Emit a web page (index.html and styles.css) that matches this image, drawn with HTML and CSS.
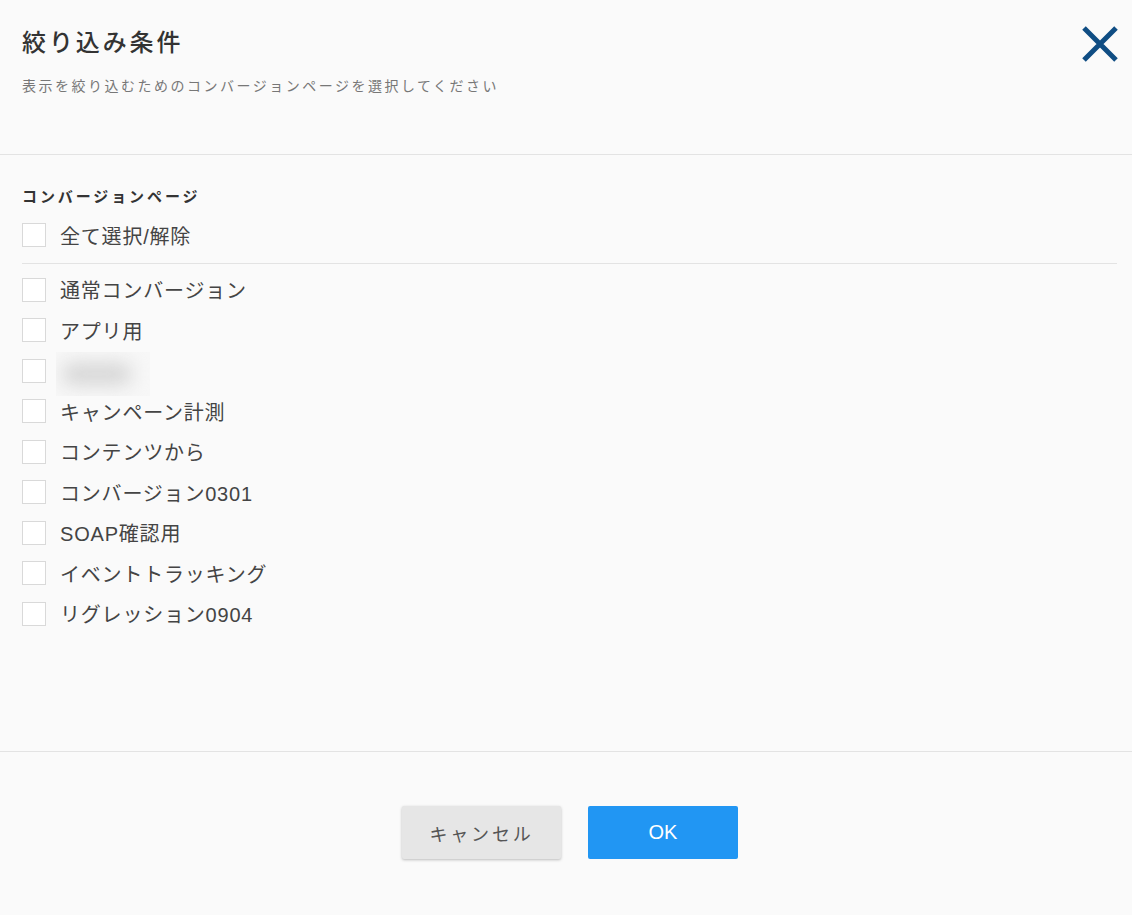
FILE: index.html
```html
<!DOCTYPE html>
<html lang="ja">
<head>
    <meta charset="UTF-8">
    <title>絞り込み条件</title>
    <link rel="stylesheet" href="styles.css">
</head>
<body>
    <div id="dialog">
        <div class="dialog-header">
            <h1 class="dialog-title">絞り込み条件</h1>
            <p class="dialog-note">表示を絞り込むためのコンバージョンページを選択してください</p>
            <button class="close-button" aria-label="閉じる">
                <svg width="38" height="38" viewBox="0 0 38 38">
                    <path d="M3 3 L35 35 M35 3 L3 35" stroke="#0f4d83" stroke-width="5" fill="none"/>
                </svg>
            </button>
        </div>
        <div class="dialog-body">
            <div class="section-label">コンバージョンページ</div>
            <label class="check-row select-all"><span class="box"></span>全て選択/解除</label>
            <div class="check-list">
                <label class="check-row"><span class="box"></span>通常コンバージョン</label>
                <label class="check-row"><span class="box"></span>アプリ用</label>
                <label class="check-row"><span class="box"></span><span class="masked"><span class="masked-blob"></span></span></label>
                <label class="check-row"><span class="box"></span>キャンペーン計測</label>
                <label class="check-row"><span class="box"></span>コンテンツから</label>
                <label class="check-row"><span class="box"></span>コンバージョン0301</label>
                <label class="check-row"><span class="box"></span>SOAP確認用</label>
                <label class="check-row"><span class="box"></span>イベントトラッキング</label>
                <label class="check-row"><span class="box"></span>リグレッション0904</label>
            </div>
        </div>
        <div class="dialog-footer">
            <button class="btn btn-cancel">キャンセル</button>
            <button class="btn btn-ok">OK</button>
        </div>
    </div>
</body>
</html>
```

FILE: styles.css
```css
body {
    margin: 0;
    background-color: #fafafa;
    font-family: "Liberation Sans", "Noto Sans CJK JP", sans-serif;
    color: #444444;
}

#dialog {
    width: 1132px;
    height: 915px;
}

.dialog-header {
    position: relative;
    height: 155px;
    box-sizing: border-box;
    padding: 25px 22px 0;
    border-bottom: 1px solid #e3e3e3;
}

.dialog-title {
    margin: 0;
    font-size: 24px;
    line-height: 36px;
    font-weight: 500;
    letter-spacing: 2.9px;
    color: #333333;
}

.dialog-note {
    margin: 15px 0 0;
    font-size: 14px;
    line-height: 20px;
    letter-spacing: 2.5px;
    color: #777777;
}

.close-button {
    position: absolute;
    top: 25px;
    right: 13px;
    padding: 0;
    border: none;
    background: none;
    cursor: pointer;
}

.dialog-body {
    height: 597px;
    box-sizing: border-box;
    padding: 31px 15px 0 22px;
    border-bottom: 1px solid #e3e3e3;
}

.section-label {
    font-size: 15px;
    line-height: 22px;
    font-weight: bold;
    letter-spacing: 2.9px;
    color: #333333;
}

.check-row {
    display: flex;
    align-items: center;
    gap: 14px;
    height: 40.5px;
    font-size: 20px;
    letter-spacing: 0.8px;
    color: #444444;
    cursor: pointer;
}

.select-all {
    margin-top: 7px;
    padding-bottom: 7px;
    border-bottom: 1px solid #e3e3e3;
}

.check-list {
    padding-top: 6px;
}

.box {
    width: 22px;
    height: 22px;
    border: 1px solid #d9d9d9;
    background-color: #ffffff;
    flex-shrink: 0;
}

.masked {
    display: flex;
    align-items: center;
    width: 94px;
    height: 44px;
    margin-left: -4px;
    margin-top: 6px;
    overflow: hidden;
    background-color: #f7f7f7;
}

.masked-blob {
    width: 70px;
    height: 22px;
    margin-left: 6px;
    background-color: #d6d6d6;
    border-radius: 11px;
    filter: blur(9px);
}

.dialog-footer {
    display: flex;
    justify-content: center;
    gap: 27px;
    padding: 54px 0 0 8px;
}

.btn {
    height: 53px;
    border: none;
    border-radius: 2px;
    font-family: "Liberation Sans", "Noto Sans CJK JP", sans-serif;
    cursor: pointer;
}

.btn-cancel {
    width: 159px;
    background-color: #e6e6e6;
    color: #555555;
    font-size: 18px;
    letter-spacing: 2.8px;
    box-shadow: 0 1px 3px rgba(0, 0, 0, 0.25);
}

.btn-ok {
    width: 150px;
    background-color: #2196f3;
    color: #ffffff;
    font-size: 20px;
}
```
